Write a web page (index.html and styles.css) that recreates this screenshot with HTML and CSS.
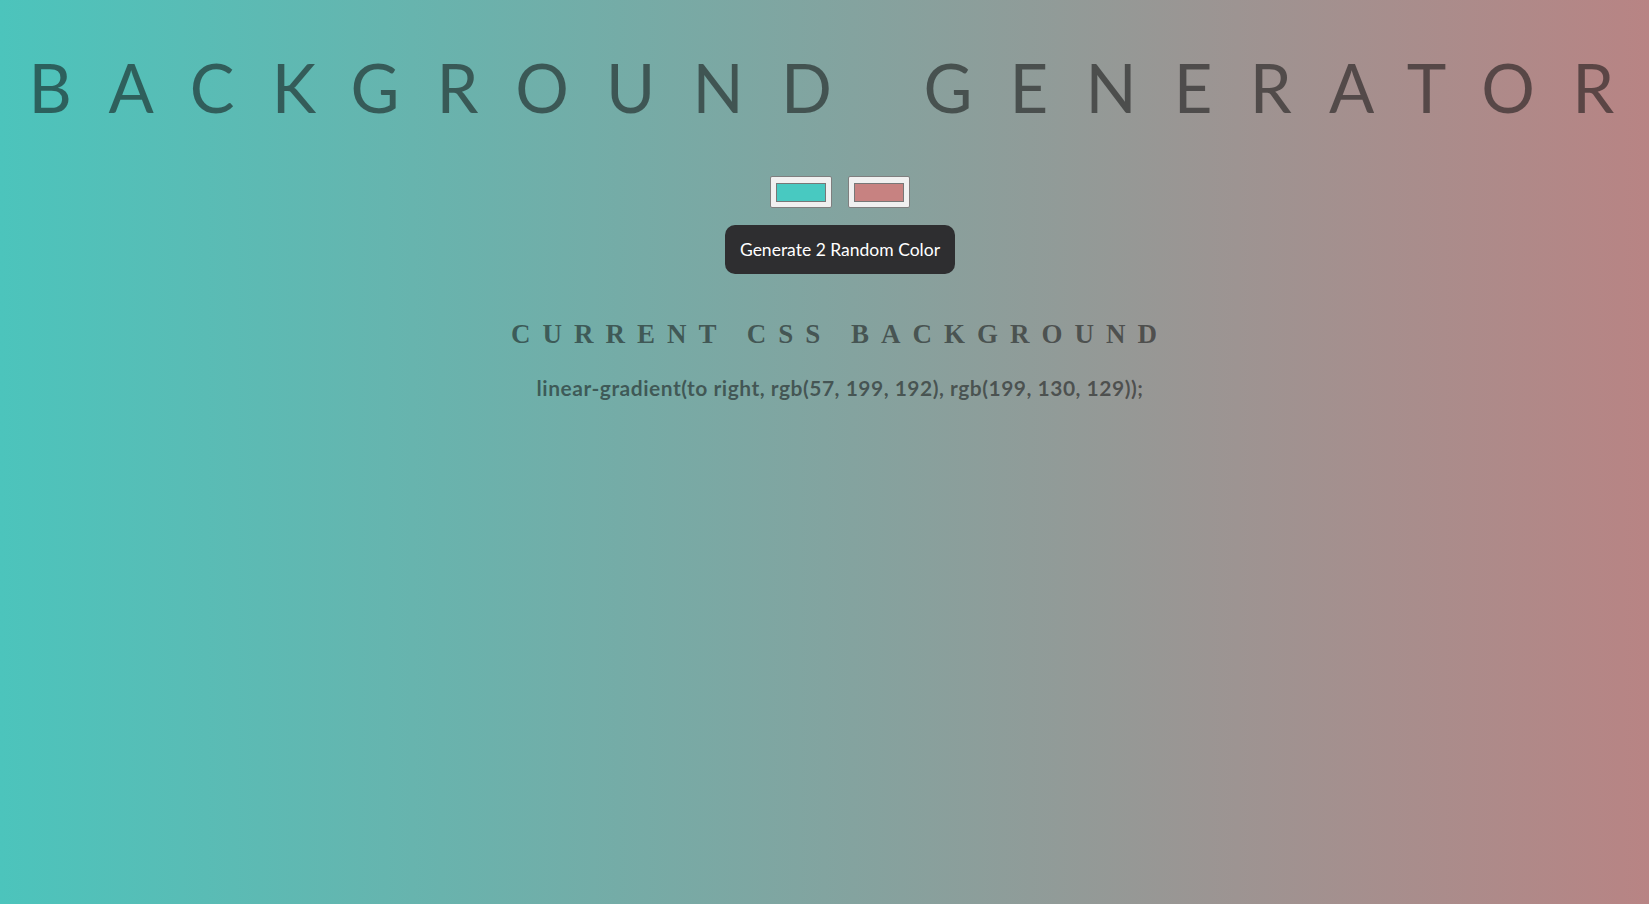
FILE: index.html
```html
<!DOCTYPE html>
<html lang="en">
<head>
<meta charset="utf-8">
<title>Background Generator</title>
<link rel="stylesheet" href="styles.css">
</head>
<body class="page">
  <main class="app">
    <h1 class="title">BACKGROUND GENERATOR</h1>
    <div class="pickers">
      <span class="picker"><span class="swatch swatch-teal"></span></span>
      <span class="picker"><span class="swatch swatch-rose"></span></span>
    </div>
    <button class="gen-btn" type="button">Generate 2 Random Color</button>
    <h3 class="current">Current CSS Background</h3>
    <p class="code">linear-gradient(to right, rgb(57, 199, 192), rgb(199, 130, 129));</p>
  </main>
</body>
</html>
```

FILE: styles.css
```css
html, body {
  margin: 0;
  padding: 0;
  height: 100%;
}

.page {
  background: linear-gradient(to right, #4cc4bc, #b88484);
  font-family: Lato, "Noto Sans", sans-serif;
  overflow: hidden;
}

.app {
  width: 1680px;
  display: flex;
  flex-direction: column;
  align-items: center;
  text-align: center;
}

.title {
  margin: 47px 0 0;
  font-family: Lato, "Noto Sans", sans-serif;
  font-weight: 400;
  font-size: 67px;
  line-height: 80px;
  letter-spacing: 37.2px;
  color: rgba(17, 17, 17, 0.55);
  white-space: nowrap;
}

.pickers {
  display: flex;
  gap: 16px;
  margin-top: 49px;
}

.picker {
  box-sizing: border-box;
  width: 62px;
  height: 32px;
  background: #f0f0f0;
  border: 1px solid #7f7f7f;
  border-radius: 2px;
  display: flex;
  align-items: center;
  justify-content: center;
}

.swatch {
  box-sizing: border-box;
  width: 50px;
  height: 19px;
  border: 1px solid #777777;
}

.swatch-teal { background: #48c9c1; }
.swatch-rose { background: #c78281; }

.gen-btn {
  margin-top: 17px;
  box-sizing: border-box;
  width: 230px;
  height: 49px;
  border: none;
  border-radius: 10px;
  background: #2e2e30;
  color: #ffffff;
  font-family: Lato, "Noto Sans", sans-serif;
  font-size: 17.5px;
  padding: 0 12px;
}

.current {
  margin: 44px 0 0;
  font-family: "Liberation Serif", "DejaVu Serif", serif;
  font-weight: 700;
  font-size: 27px;
  line-height: 32px;
  letter-spacing: 12px;
  text-transform: uppercase;
  color: rgba(17, 17, 17, 0.55);
}

.code {
  margin: 26px 0 0;
  font-family: Lato, "Noto Sans", sans-serif;
  font-weight: 700;
  font-size: 21px;
  line-height: 24px;
  letter-spacing: 0.5px;
  color: rgba(17, 17, 17, 0.55);
}
```
